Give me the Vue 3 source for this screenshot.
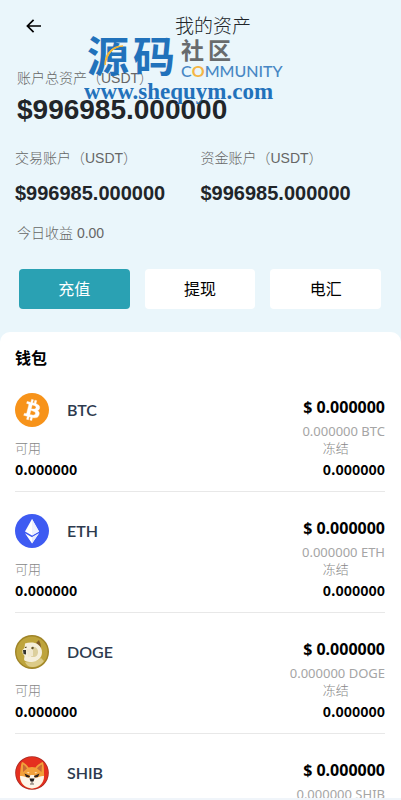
<script setup>
const accounts = [
  { label: '交易账户（USDT）', value: '$996985.000000' },
  { label: '资金账户（USDT）', value: '$996985.000000' },
]

const actions = [
  { label: '充值', primary: true },
  { label: '提现', primary: false },
  { label: '电汇', primary: false },
]

const coins = ['BTC', 'ETH', 'DOGE', 'SHIB'].map((symbol) => ({
  symbol,
  total: '$ 0.000000',
  amount: '0.000000',
}))
</script>

<template>
  <div class="page">
    <main class="scroll">
      <header class="bar">
        <button class="back" type="button" aria-label="返回">
          <svg viewBox="0 0 15 14" width="15" height="14" fill="none" stroke="#000" stroke-width="1.7">
            <path d="M7.6 0.8 1.4 7l6.2 6.2M1.4 7H15" />
          </svg>
        </button>
        <h1 class="title">我的资产</h1>
      </header>

      <div class="brand">
        <div class="brand-row">
          <div class="brand-main"><span>源</span><span>码</span></div>
          <div class="brand-side">
            <div class="brand-sub"><span>社</span><span>区</span></div>
            <span class="brand-en">C<b>O</b>MMUNITY</span>
          </div>
          <svg class="brand-arc" viewBox="0 0 20 24" width="20" height="24" aria-hidden="true">
            <path d="M1 22C0 12 8 2 19 3 9 4 3 11 1 22z" fill="#f8b52c" stroke="#f8b52c" />
          </svg>
        </div>
        <span class="brand-url">www.shequym.com</span>
      </div>

      <section class="summary">
        <p class="label">账户总资产（USDT）</p>
        <p class="total">$996985.000000</p>
      </section>

      <section class="accounts">
        <div v-for="account in accounts" :key="account.label">
          <p class="label">{{ account.label }}</p>
          <p class="value">{{ account.value }}</p>
        </div>
      </section>

      <p class="label today">今日收益 0.00</p>

      <nav class="actions">
        <button
          v-for="action in actions"
          :key="action.label"
          type="button"
          class="action"
          :class="{ primary: action.primary }"
        >{{ action.label }}</button>
      </nav>

      <section class="wallet">
        <h2 class="heading">钱包</h2>
        <article v-for="coin in coins" :key="coin.symbol" class="coin">
          <div class="top">
            <svg v-if="coin.symbol === 'BTC'" class="icon" viewBox="0 0 32 32">
              <circle cx="16" cy="16" r="16" fill="#f7931a" />
              <path fill="#fff" stroke="#fff" stroke-width="0.4" fill-rule="evenodd" d="M23.189 14.02c.314-2.096-1.283-3.223-3.465-3.975l.708-2.84-1.728-.43-.69 2.765c-.454-.114-.92-.22-1.385-.326l.695-2.783L15.596 6l-.708 2.839c-.376-.086-.746-.17-1.104-.26l.002-.009-2.384-.595-.46 1.846s1.283.294 1.256.312c.7.175.826.638.805 1.006l-.806 3.235c.048.012.11.03.18.057l-.183-.045-1.13 4.532c-.086.212-.303.531-.793.41.018.025-1.256-.313-1.256-.313l-.858 1.978 2.25.561c.418.105.828.215 1.231.318l-.715 2.872 1.727.43.708-2.84c.472.127.93.245 1.378.357l-.706 2.828 1.728.43.715-2.866c2.948.558 5.164.333 6.097-2.333.752-2.146-.037-3.385-1.588-4.192 1.13-.26 1.98-1.003 2.207-2.538zm-3.95 5.538c-.533 2.147-4.148.986-5.32.695l.95-3.805c1.172.293 4.929.872 4.37 3.11zm.535-5.569c-.487 1.953-3.495.96-4.47.717l.86-3.45c.975.243 4.118.696 3.61 2.733z" />
            </svg>
            <svg v-else-if="coin.symbol === 'ETH'" class="icon" viewBox="0 0 34 34">
              <circle cx="17" cy="17" r="17" fill="#3e5bf2" />
              <path d="M17 5 24 17.5 17 21.6 10 17.5z" fill="#fff" />
              <path d="M17 5V21.6L24 17.5z" fill="#eef1fe" />
              <path d="M10 19.2 17 23.2 24 19.2 17 29.5z" fill="#fff" />
              <path d="M17 23.2 24 19.2 17 29.5z" fill="#e6eafd" />
            </svg>
            <svg v-else-if="coin.symbol === 'DOGE'" class="icon" viewBox="0 0 34 34">
              <circle cx="17" cy="17" r="17" fill="#9f8427" />
              <circle cx="17" cy="17" r="15.6" fill="#bea43c" />
              <path d="M10 27c5 1 11 0 16-4l3 3c-3 4-8 6-12 6-3 0-6-2-7-5z" fill="#dccb88" />
              <path d="M21 8 24 5l1.500 4 .5 4-3-1z" fill="#7f5c28" />
              <path d="M10 8.500C14 7 20 7 23 9.500c3 2 4 5 4 8 0 5-4 9-10 9.500-3 0-6 0-7.500-1.500-1-1 0-3 0-4.500L7.500 18v-3L9.500 13z" fill="#f5efdc" />
              <path d="M16 12h2.500c3 0 4.500 2 4.500 5s-2 5-4.500 5H16z" fill="#dccf9d" />
              <path d="M12 14h6v7l-5 1z" fill="#f0e8cf" />
              <path d="M8 15h3v4.500L8.500 19z" fill="#34342e" />
              <path d="M16 13l2-1.500 1 1.500-1.500 1.500z" fill="#5d4e2a" />
              <path d="M10 12l1.500-.5v1.500H10z" fill="#5d4e2a" />
            </svg>
            <svg v-else class="icon" viewBox="0 0 34 34">
              <circle cx="17" cy="17" r="16.8" fill="#a92820" />
              <circle cx="17" cy="17" r="16" fill="#e5301f" />
              <path d="M7 6C10 7 12 9 13.500 11.500q3.500-1 7 0C22 9 25 7 28 6c1 4 1 8 1 11 1 8-4 15-12 15.500C9 32 4 26 5 18 5.500 14 5.500 9 7 6z" fill="#f2a03a" />
              <path d="M8 8.500C10 9 11 11 12 12.500L8 16zM27 8.500C25 9 23 11 22 12.500L26.500 16z" fill="#c96a35" />
              <path d="M5 20c3-.5 6 1 9 2l1.500-3h3.500l1.500 3c3-1 6-2.500 8.500-2 0 6-4 12-12 12.500C10 32 5 27 5 20z" fill="#fdf5e8" />
              <path d="M11.500 16.500l3-.5-1 1.500zM22.500 16.500l-3-.5 1 1.500z" fill="#fde3bd" />
              <path d="M9.500 17.500l5.500 2.500-.5 1.500-3.500-.5zM24.500 17.500l-5.500 2.500.5 1.500 3.500-.5z" fill="#30221c" />
              <path d="M14.500 22.500h5l-1 3h-3z" fill="#1e1b1b" />
              <path d="M17 25v2.500M15 28h4" stroke="#4a403b" stroke-width="0.8" />
            </svg>
            <h3 class="name">{{ coin.symbol }}</h3>
            <div class="sums">
              <p class="usd">{{ coin.total }}</p>
              <p class="native">{{ coin.amount }} {{ coin.symbol }}</p>
            </div>
          </div>
          <dl class="balances">
            <div>
              <dt>可用</dt>
              <dd>{{ coin.amount }}</dd>
            </div>
            <div>
              <dt>冻结</dt>
              <dd>{{ coin.amount }}</dd>
            </div>
          </dl>
        </article>
      </section>
    </main>
    <footer class="strip"></footer>
  </div>
</template>

<style>
body {
  margin: 0;
  background: #eaf6fb;
}
</style>

<style scoped>
.page {
  position: relative;
  display: flex;
  flex-direction: column;
  height: 100vh;
  background: #eaf6fb;
  color: #212529;
  font-family: "Liberation Sans", "Noto Sans CJK SC", sans-serif;
}

h1, h2, h3, p, dl, dd {
  margin: 0;
}

button {
  border: 0;
  padding: 0;
  font: inherit;
  cursor: pointer;
}

.scroll {
  flex: 1;
  min-height: 0;
  overflow-y: auto;
  scrollbar-width: none;
}

.bar {
  display: flex;
  align-items: center;
  height: 52px;
  padding: 0 16px;
}

.back {
  display: flex;
  justify-content: flex-end;
  width: 25px;
  background: none;
}

.title {
  flex: 1;
  padding-top: 2px;
  text-align: center;
  font-size: 19px;
  line-height: 28px;
  font-weight: 300;
}

.brand {
  position: absolute;
  top: 36px;
  left: 84px;
  z-index: 1;
  color: #176bb8;
  pointer-events: none;
  opacity: 0.95;
}

.brand-row {
  position: relative;
  display: flex;
  gap: 6px;
  padding-left: 3px;
}

.brand-main {
  display: flex;
  gap: 4px;
  font-size: 42px;
  line-height: 44px;
  font-weight: 700;
}

.brand-side {
  display: flex;
  flex-direction: column;
  padding-top: 3px;
}

.brand-sub {
  display: flex;
  gap: 4px;
  color: #626466;
  font-size: 23px;
  line-height: 24px;
  font-weight: 700;
}

.brand-en {
  color: #3f82c2;
  font-family: Lato, sans-serif;
  font-size: 16px;
  line-height: 16px;
  font-weight: 500;
}

.brand-en b {
  color: #f6b33c;
  font-weight: 700;
}

.brand-arc {
  position: absolute;
  top: 7px;
  left: 20px;
}

.brand-url {
  display: block;
  font-family: "Liberation Serif", serif;
  font-size: 23px;
  line-height: 24px;
  font-weight: 700;
}

.summary {
  padding: 16px 17px 0;
}

.label {
  color: #666;
  font-size: 14px;
  line-height: 20px;
  font-weight: 300;
}

.total {
  margin-top: 4px;
  font-size: 28px;
  line-height: 36px;
  font-weight: 700;
}

.accounts {
  display: grid;
  grid-template-columns: 1fr 1fr;
  padding: 20px 15px 0;
}

.value {
  margin-top: 11px;
  font-size: 20px;
  line-height: 28px;
  font-weight: 700;
}

.today {
  padding: 16px 17px 0;
}

.actions {
  display: grid;
  grid-template-columns: repeat(3, 1fr);
  gap: 15px;
  padding: 26px 20px 23px 19px;
}

.action {
  height: 40px;
  padding-bottom: 2px;
  border-radius: 4px;
  background: #fff;
  color: #000;
  font-size: 16px;
}

.action.primary {
  background: #2aa1b3;
  color: #fff;
}

.wallet {
  padding: 15px 16px 0 15px;
  border-radius: 10px 10px 0 0;
  background: #fff;
}

.heading {
  color: #000;
  font-size: 16px;
  line-height: 24px;
  font-weight: 700;
}

.coin {
  padding: 22px 0 8px;
  border-bottom: 1px solid #e8e8e8;
}

.top {
  display: flex;
  align-items: flex-start;
}

.icon {
  width: 34px;
  height: 34px;
}

.name {
  flex: 1;
  margin-left: 18px;
  color: #2d3a4e;
  font-family: Lato, sans-serif;
  font-size: 16px;
  line-height: 34px;
  font-weight: 600;
}

.sums {
  text-align: right;
  font-family: "Noto Sans", sans-serif;
}

.usd {
  color: #000;
  font-size: 16px;
  line-height: 28px;
  font-weight: 700;
}

.native {
  color: #a5a5a5;
  font-size: 13px;
  line-height: 20px;
}

.balances {
  display: flex;
  justify-content: space-between;
  font-family: "Noto Sans CJK SC", sans-serif;
}

.balances dt {
  color: #888;
  font-size: 13px;
  line-height: 14px;
  font-weight: 300;
}

.balances dd {
  color: #000;
  font-size: 14px;
  line-height: 28px;
  font-weight: 700;
}

.strip {
  height: 2px;
  background: #f0f5fa;
}
</style>
